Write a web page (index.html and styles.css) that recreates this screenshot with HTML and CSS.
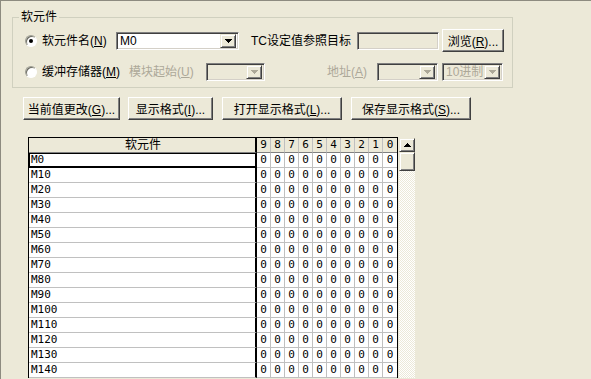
FILE: index.html
```html
<!DOCTYPE html>
<html lang="zh-CN">
<head>
  <meta charset="UTF-8">
  <title>软元件批量监视</title>
  <link rel="stylesheet" href="styles.css">
</head>
<body>
  <div class="window">
    <fieldset class="group">
      <legend>软元件</legend>

      <div class="row">
        <span class="radio checked"></span>
        <span class="lbl w-name">软元件名(<u>N</u>)</span>
        <div class="combo w-dev">
          <span class="combo-text">M0</span>
          <span class="drop"><svg width="7" height="4"><path d="M0 0h7L3.5 4z"/></svg></span>
        </div>
        <span class="lbl w-tc">TC设定值参照目标</span>
        <div class="field off w-tcbox"></div>
        <button class="btn w-browse">浏览(<u>R</u>)...</button>
      </div>

      <div class="row">
        <span class="radio"></span>
        <span class="lbl w-buf">缓冲存储器(<u>M</u>)</span>
        <span class="lbl gray w-start">模块起始(<u>U</u>)</span>
        <div class="combo off w-start-box">
          <span class="combo-text"></span>
          <span class="drop"><svg width="7" height="4"><path d="M0 0h7L3.5 4z"/></svg></span>
        </div>
        <span class="lbl gray w-addr">地址(<u>A</u>)</span>
        <div class="combo off w-addr-box">
          <span class="combo-text"></span>
          <span class="drop"><svg width="7" height="4"><path d="M0 0h7L3.5 4z"/></svg></span>
        </div>
        <div class="combo off w-radix">
          <span class="combo-text">10进制</span>
          <span class="drop"><svg width="7" height="4"><path d="M0 0h7L3.5 4z"/></svg></span>
        </div>
      </div>
    </fieldset>

    <div class="toolbar">
      <button class="btn w-b1">当前值更改(<u>G</u>)...</button>
      <button class="btn w-b2">显示格式(<u>I</u>)...</button>
      <button class="btn w-b3">打开显示格式(<u>L</u>)...</button>
      <button class="btn w-b3">保存显示格式(<u>S</u>)...</button>
    </div>

    <div class="monitor">
      <div class="grid">
        <div class="hd name">软元件</div>
        <div class="hd">9</div><div class="hd">8</div><div class="hd">7</div><div class="hd">6</div><div class="hd">5</div>
        <div class="hd">4</div><div class="hd">3</div><div class="hd">2</div><div class="hd">1</div><div class="hd last">0</div>

        <div class="name focus">M0</div><div>0</div><div>0</div><div>0</div><div>0</div><div>0</div><div>0</div><div>0</div><div>0</div><div>0</div><div class="last">0</div>
        <div class="name">M10</div><div>0</div><div>0</div><div>0</div><div>0</div><div>0</div><div>0</div><div>0</div><div>0</div><div>0</div><div class="last">0</div>
        <div class="name">M20</div><div>0</div><div>0</div><div>0</div><div>0</div><div>0</div><div>0</div><div>0</div><div>0</div><div>0</div><div class="last">0</div>
        <div class="name">M30</div><div>0</div><div>0</div><div>0</div><div>0</div><div>0</div><div>0</div><div>0</div><div>0</div><div>0</div><div class="last">0</div>
        <div class="name">M40</div><div>0</div><div>0</div><div>0</div><div>0</div><div>0</div><div>0</div><div>0</div><div>0</div><div>0</div><div class="last">0</div>
        <div class="name">M50</div><div>0</div><div>0</div><div>0</div><div>0</div><div>0</div><div>0</div><div>0</div><div>0</div><div>0</div><div class="last">0</div>
        <div class="name">M60</div><div>0</div><div>0</div><div>0</div><div>0</div><div>0</div><div>0</div><div>0</div><div>0</div><div>0</div><div class="last">0</div>
        <div class="name">M70</div><div>0</div><div>0</div><div>0</div><div>0</div><div>0</div><div>0</div><div>0</div><div>0</div><div>0</div><div class="last">0</div>
        <div class="name">M80</div><div>0</div><div>0</div><div>0</div><div>0</div><div>0</div><div>0</div><div>0</div><div>0</div><div>0</div><div class="last">0</div>
        <div class="name">M90</div><div>0</div><div>0</div><div>0</div><div>0</div><div>0</div><div>0</div><div>0</div><div>0</div><div>0</div><div class="last">0</div>
        <div class="name">M100</div><div>0</div><div>0</div><div>0</div><div>0</div><div>0</div><div>0</div><div>0</div><div>0</div><div>0</div><div class="last">0</div>
        <div class="name">M110</div><div>0</div><div>0</div><div>0</div><div>0</div><div>0</div><div>0</div><div>0</div><div>0</div><div>0</div><div class="last">0</div>
        <div class="name">M120</div><div>0</div><div>0</div><div>0</div><div>0</div><div>0</div><div>0</div><div>0</div><div>0</div><div>0</div><div class="last">0</div>
        <div class="name">M130</div><div>0</div><div>0</div><div>0</div><div>0</div><div>0</div><div>0</div><div>0</div><div>0</div><div>0</div><div class="last">0</div>
        <div class="name">M140</div><div>0</div><div>0</div><div>0</div><div>0</div><div>0</div><div>0</div><div>0</div><div>0</div><div>0</div><div class="last">0</div>
      </div>

      <div class="scrollbar">
        <div class="sb-btn"><svg width="7" height="4"><path d="M3.5 0L7 4H0z"/></svg></div>
        <div class="sb-thumb"></div>
        <div class="sb-track"></div>
      </div>
    </div>
  </div>
</body>
</html>
```

FILE: styles.css
```css
html, body {
  margin: 0;
  padding: 0;
}
body {
  width: 591px;
  height: 379px;
  overflow: hidden;
  background-color: #ece9d8;
  font-family: "Liberation Sans", "Noto Sans CJK SC", sans-serif;
  font-size: 12px;
  color: #000;
}
.window {
  box-sizing: border-box;
  height: 379px;
  border-top: 1px solid #8d8b80;
  border-left: 1px solid #8d8b80;
}

/* group box */
.group {
  box-sizing: border-box;
  width: 501px;
  margin: 9px 0 0 11px;
  padding: 5px 0 4px 11px;
  border: 1px solid #d0d0bf;
  border-radius: 0;
}
.group legend {
  margin-left: -5px;
  padding: 0 2px;
  line-height: 14px;
}
.row {
  display: flex;
  align-items: center;
  height: 23px;
}
.row + .row {
  margin-top: 8px;
}
.lbl {
  display: inline-block;
  flex: none;
  line-height: 16px;
  white-space: nowrap;
}
.gray {
  color: #aca899;
}
.w-name { width: 74px; }
.w-tc { width: 106px; margin-left: 12px; }
.w-buf { width: 87px; }
.w-start { width: 77px; }
.w-addr { width: 102px; padding-right: 10px; text-align: right; }

/* radio */
.radio {
  position: relative;
  box-sizing: border-box;
  flex: none;
  width: 12px;
  height: 12px;
  margin: 0 5px 0 1px;
  border: 1px solid;
  border-color: #9d9d92 #fff #fff #9d9d92;
  border-radius: 50%;
  background: #fff;
  box-shadow: inset 1px 1px #6b6b62;
}
.radio.checked::after {
  content: "";
  position: absolute;
  left: 3px;
  top: 3px;
  width: 4px;
  height: 4px;
  border-radius: 50%;
  background: #000;
}

/* combo / text fields */
.combo, .field {
  box-sizing: border-box;
  flex: none;
  height: 18px;
  border: 1px solid;
  border-color: #808080 #fff #fff #808080;
  box-shadow: inset 1px 1px #404040, inset -1px -1px #d4d0c8;
  background: #fff;
}
.combo {
  display: flex;
  align-items: center;
  padding: 2px;
}
.combo-text {
  flex: 1;
  padding-left: 1px;
  line-height: 14px;
  white-space: nowrap;
}
.drop {
  box-sizing: border-box;
  display: flex;
  align-items: center;
  justify-content: center;
  width: 16px;
  height: 14px;
  background: #ece9d8;
  border: 1px solid;
  border-color: #ece9d8 #404040 #404040 #ece9d8;
  box-shadow: inset 1px 1px #fff, inset -1px -1px #808080;
}
.off {
  background: #ece9d8;
  color: #aca899;
}
.off .drop svg {
  fill: #aca899;
}
.w-dev { width: 123px; }
.w-tcbox { width: 82px; }
.w-start-box { width: 59px; }
.w-addr-box { width: 61px; }
.w-radix { width: 61px; margin-left: 4px; }

/* buttons */
.btn {
  box-sizing: border-box;
  flex: none;
  height: 23px;
  padding: 0;
  font: inherit;
  color: #000;
  background: #ece9d8;
  border: 1px solid;
  border-color: #fff #404040 #404040 #fff;
  box-shadow: inset -1px -1px #808080;
  white-space: nowrap;
}
.w-browse { width: 62px; margin-left: 3px; }

.toolbar {
  display: flex;
  gap: 9px;
  margin: 9px 0 0 22px;
}
.w-b1 { width: 97px; }
.w-b2 { width: 85px; margin-left: -1px; }
.w-b3 { width: 120px; }

/* monitor grid */
.monitor {
  display: flex;
  align-items: flex-start;
  margin: 17px 0 0 27px;
}
.grid {
  display: grid;
  grid-template-columns: 228px repeat(10, 14px);
  grid-auto-rows: 15px;
  border: 1px solid #000;
  border-bottom: none;
  background: #fff;
  font-family: "DejaVu Sans Mono", monospace;
  font-size: 11px;
}
.grid > div {
  box-sizing: border-box;
  border-right: 1px solid #c0c0c0;
  border-bottom: 1px solid #c0c0c0;
  line-height: 14px;
  text-align: center;
}
.grid > .name {
  padding-left: 2px;
  border-right: 2px solid #000;
  text-align: left;
}
.grid > .last {
  border-right: none;
}
.grid > .hd {
  background: #ece9d8;
  border-bottom-color: #808080;
}
.grid > .hd.name {
  text-align: center;
  font-family: "Liberation Sans", "Noto Sans CJK SC", sans-serif;
  font-size: 12px;
}
.grid > .focus {
  border-bottom: 2px solid #000;
  box-shadow: inset 1px 0 #000, inset 0 1px #000;
  line-height: 13px;
}

/* scrollbar */
.scrollbar {
  display: flex;
  flex-direction: column;
  width: 16px;
  height: 240px;
  margin: 1px 0 0 1px;
}
.sb-btn, .sb-thumb {
  box-sizing: border-box;
  flex: none;
  background: #ece9d8;
  border: 1px solid;
  border-color: #ece9d8 #404040 #404040 #ece9d8;
  box-shadow: inset 1px 1px #fff, inset -1px -1px #808080;
}
.sb-btn {
  display: flex;
  align-items: center;
  justify-content: center;
  height: 14px;
}
.sb-thumb {
  height: 19px;
}
.sb-track {
  flex: 1;
  background-image: repeating-conic-gradient(#fff 0 25%, #ece9d8 0 50%);
  background-size: 2px 2px;
}
svg {
  display: block;
  shape-rendering: crispEdges;
}
```
